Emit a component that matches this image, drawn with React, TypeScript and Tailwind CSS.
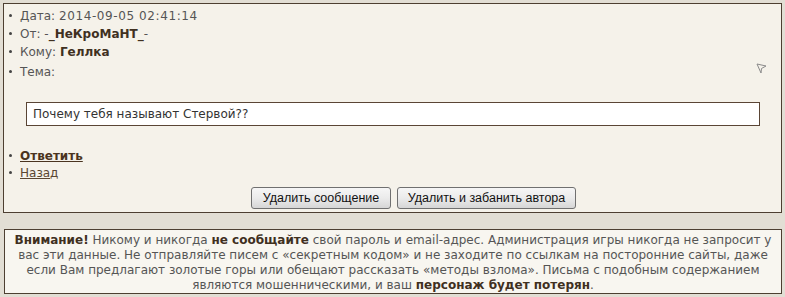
import React from "react";

const Bullet = () => (
  <span className="inline-block w-[3px] h-[3px] rounded-full bg-[#444] mr-[8px] ml-[5px] align-middle relative top-[-1px]" />
);

const btn =
  "h-[22px] px-0 rounded-[3px] border border-[#707070] bg-gradient-to-b from-[#f6f6f6] via-[#ebebeb] to-[#d6d6d6] text-[#111] text-[12.5px] leading-none";

export default function App() {
  return (
    <div
      className="w-[785px] h-[297px] bg-[#e2ded4] overflow-hidden pt-[3px] text-[12px] text-[#555]"
      style={{ fontFamily: '"DejaVu Sans", Tahoma, Verdana, sans-serif' }}
    >
      <div className="ml-[3px] w-[779px] border border-[#4d3f31] bg-[#f5f2ea] pt-[3px] pb-[3px]">
        <div className="leading-[18px]">
          <div className="flex items-center">
            <Bullet />
            <span>
              Дата: <span className="tracking-[0.6px]">2014-09-05 02:41:14</span>
            </span>
          </div>
          <div className="flex items-center">
            <Bullet />
            <span>
              От: -<b className="text-[#40301f]">_НеКроМаНТ_</b>-
            </span>
          </div>
          <div className="flex items-center">
            <Bullet />
            <span>
              Кому: <b className="text-[#40301f]">Геллка</b>
            </span>
          </div>
          <div className="flex items-center mt-[2px] relative">
            <Bullet />
            <span>Тема:</span>
            <svg
              className="absolute right-[14px] top-[0px]"
              width="11"
              height="11"
              viewBox="0 0 11 11"
              fill="none"
              stroke="#8a8a8a"
              strokeWidth="1"
            >
              <path d="M1 1 L10 3 L5.5 5.5 L5 10 Z" />
            </svg>
          </div>
        </div>
        <div className="mt-[21px] ml-[22px] w-[734px] h-[24px] border border-[#5a4535] bg-white flex items-center px-[6px] text-[#333]">
          Почему тебя называют Стервой??
        </div>
        <div className="mt-[22px] leading-[17px]">
          <div className="flex items-center">
            <Bullet />
            <a href="#" className="font-bold underline text-[#4a3420]">
              Ответить
            </a>
          </div>
          <div className="flex items-center">
            <Bullet />
            <a href="#" className="underline text-[#5a4632]">
              Назад
            </a>
          </div>
        </div>
        <div
          className="mt-[5px] flex justify-center gap-[6px] pl-[42px]"
          style={{ fontFamily: '"Liberation Sans", Arial, sans-serif' }}
        >
          <button className={`${btn} w-[140px]`}>Удалить сообщение</button>
          <button className={`${btn} w-[179px]`}>Удалить и забанить автора</button>
        </div>
      </div>
      <div className="mt-[16px] ml-[4px] w-[778px] border border-[#4d3f31] bg-[#f8f6f0] px-[4px] pt-[3px] pb-0 text-center leading-[15px] whitespace-nowrap">
        <div>
          <b className="text-[#40301f]">Внимание!</b> Никому и никогда{" "}
          <b className="text-[#40301f]">не сообщайте</b> свой пароль и email-адрес. Администрация игры никогда не
          запросит у
        </div>
        <div>
          вас эти данные. Не отправляйте писем с «секретным кодом» и не заходите по ссылкам на посторонние сайты, даже
        </div>
        <div>
          если Вам предлагают золотые горы или обещают рассказать «методы взлома». Письма с подобным содержанием
        </div>
        <div>
          являются мошенническими, и ваш <b className="text-[#40301f]">персонаж будет потерян</b>.
        </div>
      </div>
    </div>
  );
}
